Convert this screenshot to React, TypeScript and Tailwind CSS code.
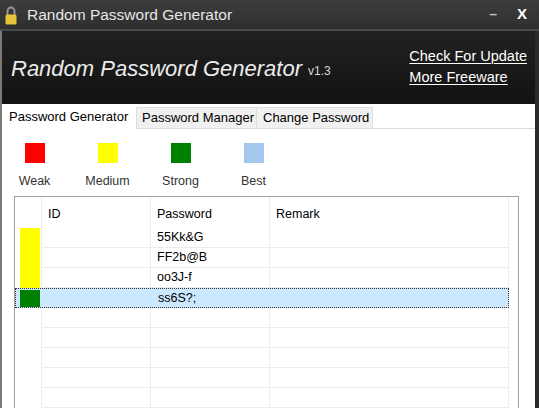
const rows = [
  { color: "bg-[#ffff00]", pwd: "55Kk&G" },
  { color: "bg-[#ffff00]", pwd: "FF2b@B" },
  { color: "bg-[#ffff00]", pwd: "oo3J-f" },
];

const legend = [
  { color: "bg-[#ff0000]", label: "Weak" },
  { color: "bg-[#ffff00]", label: "Medium" },
  { color: "bg-[#008000]", label: "Strong" },
  { color: "bg-[#a6c8ee]", label: "Best" },
];

const Lock = () => (
  <svg width="12" height="20" viewBox="0 0 12 20">
    <path d="M2.5 10 V6 a3.5 3.5 0 0 1 7 0 V10" fill="none" stroke="#9a9a9a" strokeWidth="1.8" />
    <rect x="0.5" y="9.5" width="11" height="10" rx="1.5" fill="#e6c23a" />
  </svg>
);

const EmptyRow = () => (
  <div className="grid grid-cols-[27px_109px_119px_239px_1fr] h-[20px]">
    <div className="border-r border-[#ececec]" />
    <div className="border-r border-b border-[#ececec]" />
    <div className="border-r border-b border-[#ececec]" />
    <div className="border-r border-b border-[#ececec]" />
    <div />
  </div>
);

const App = () => {
  return (
    <div className="w-[539px] h-[408px] overflow-hidden flex flex-col bg-[#2b2b2b] font-['Liberation_Sans',sans-serif]">
      {/* title bar */}
      <div className="shrink-0 h-[29px] flex items-center bg-gradient-to-b from-[#3d3d3d] to-[#2e2e2e] pl-[5px] pr-[12px]">
        <Lock />
        <span className="ml-[10px] text-[15.5px] text-[#e6e6e6]">Random Password Generator</span>
        <span className="ml-auto text-[#bdbdbd] text-[14px] font-bold">–</span>
        <span className="ml-[20px] text-white text-[15px] font-bold">X</span>
      </div>
      <div className="shrink-0 h-[2px] bg-[#4a4a4a]" />

      <div className="flex-1 min-h-0 flex flex-col border-l-2 border-[#7a7a7a] border-r-4 border-r-[#2a2a2a]">
        {/* banner */}
        <div className="shrink-0 h-[73px] flex items-center bg-gradient-to-b from-[#222222] to-[#121212] pl-[9px] pr-[8px]">
          <span className="italic text-[22px] text-[#ececec] mt-[1px]">Random Password Generator</span>
          <span className="ml-[6px] mt-[6px] text-[12px] text-[#d8d8d8]">v1.3</span>
          <div className="ml-auto flex flex-col gap-[1px] text-[14.5px] leading-[20px] text-white mt-[-3px]">
            <span className="underline underline-offset-2 decoration-1">Check For Update</span>
            <span className="underline underline-offset-2 decoration-1">More Freeware</span>
          </div>
        </div>

        {/* tabs */}
        <div className="shrink-0 h-[25px] flex items-end bg-white text-[13px] text-black whitespace-nowrap">
          <div className="h-[25px] w-[134px] px-[7px] flex items-center bg-white">Password Generator</div>
          <div className="h-[22px] w-[121px] px-[5px] flex items-center bg-[#f0f0f0] border border-[#dcdcdc]">Password Manager</div>
          <div className="h-[22px] w-[116px] px-[6px] flex items-center bg-[#f0f0f0] border border-l-0 border-[#dcdcdc]">Change Password</div>
          <div className="flex-1 h-[1px] bg-[#dcdcdc]" />
        </div>

        {/* panel */}
        <div className="flex-1 min-h-0 overflow-hidden bg-white pt-[14px] pl-[12px] pr-[16px]">
          <div className="flex -ml-[16px]">
            {legend.map((l) => (
              <div key={l.label} className="w-[73px] flex flex-col items-center">
                <div className={`w-[20px] h-[20px] ${l.color}`} />
                <span className="mt-[10px] text-[12.5px] text-[#333333] leading-[16px]">{l.label}</span>
              </div>
            ))}
          </div>

          <div className="mt-[7px] border border-[#a0a0a0] border-b-0 text-[12.5px] text-black">
            <div className="grid grid-cols-[27px_109px_119px_239px_1fr] h-[31px] items-stretch">
              <div className="border-r border-[#ececec]" />
              <div className="border-r border-[#ececec] pl-[6px] pt-[8px]">ID</div>
              <div className="border-r border-[#ececec] pl-[6px] pt-[8px]">Password</div>
              <div className="border-r border-[#ececec] pl-[6px] pt-[8px]">Remark</div>
              <div />
            </div>
            {rows.map((r) => (
              <div key={r.pwd} className="grid grid-cols-[27px_109px_119px_239px_1fr] h-[20px]">
                <div className="border-r border-[#ececec] pl-[5px]">
                  <div className={`w-[20px] h-[20px] ${r.color}`} />
                </div>
                <div className="border-r border-b border-[#ececec]" />
                <div className="border-r border-b border-[#ececec] pl-[6px] leading-[19px]">{r.pwd}</div>
                <div className="border-r border-b border-[#ececec]" />
                <div />
              </div>
            ))}
            <div className="grid grid-cols-[494px_1fr] h-[20px]">
              <div className="bg-[#cce8ff] border border-dotted border-[#333333] flex items-center pl-[4px]">
                <div className="w-[20px] h-[17px] bg-[#008000]" />
                <span className="ml-[118px] leading-[18px]">ss6S?;</span>
              </div>
              <div />
            </div>
            <EmptyRow />
            <EmptyRow />
            <EmptyRow />
            <EmptyRow />
            <EmptyRow />
          </div>
        </div>
      </div>
    </div>
  );
};

export default App;
